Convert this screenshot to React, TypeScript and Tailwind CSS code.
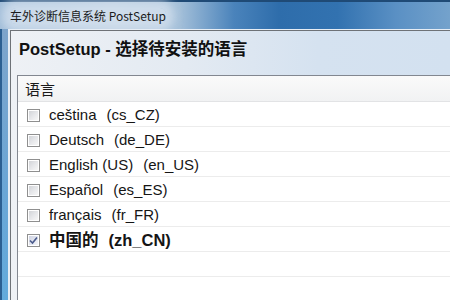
import React from "react";

function CheckBox({ checked }: { checked?: boolean }) {
  return (
    <div className="w-[13px] h-[13px] shrink-0 border border-[#8f8f8f] bg-white p-px">
      <div
        className={
          "w-full h-full flex items-center justify-center " +
          (checked
            ? "bg-[linear-gradient(135deg,#cfd3e2_0%,#e2e5ef_50%,#f4f5f9_100%)]"
            : "bg-[linear-gradient(135deg,#d2d4d8_0%,#e6e7ea_50%,#f7f7f7_100%)]")
        }
      >
        {checked && (
          <svg width="9" height="9" viewBox="0 0 9 9">
            <path d="M1 4.5 L3.5 7 L8 1.5" fill="none" stroke="#4a5a8c" strokeWidth="1.6" />
          </svg>
        )}
      </div>
    </div>
  );
}

const items = [
  { name: "ceština", code: "(cs_CZ)" },
  { name: "Deutsch", code: "(de_DE)" },
  { name: "English (US)", code: "(en_US)" },
  { name: "Español", code: "(es_ES)" },
  { name: "français", code: "(fr_FR)" },
  { name: "中国的", code: "(zh_CN)", checked: true },
];

export default function App() {
  return (
    <div className="w-[450px] h-[300px] overflow-hidden flex flex-col bg-[#5d8fc2] font-['Liberation_Sans','Noto_Sans_CJK_SC',sans-serif]">
      <div className="h-[29px] shrink-0 border-t-2 border-[#1f4a76] bg-[linear-gradient(90deg,#9fbcd8_0%,#b3c9de_25%,#a3bfd9_40%,#4a83bb_52%,#2e6dab_62%,#3272b0_75%,#5a90c4_88%,#74a2cc_100%)] flex items-center pl-[10px]">
        <span className="text-[12px] leading-[16px] text-[#1b1b1b] font-['Noto_Sans_CJK_SC',sans-serif] bg-[#dbe6f1]/70 rounded-[6px] shadow-[0_0_10px_8px_rgba(219,230,241,0.7)]">
          车外诊断信息系统 PostSetup
        </span>
      </div>
      <div className="flex flex-1 min-h-0">
        <div className="w-[8px] shrink-0 border-l-2 border-[#2b5f92] bg-[linear-gradient(180deg,#7da4cb_0%,#6aa6d6_60%,#62aadc_100%)]" />
        <div className="flex-1 min-w-0 border-l-2 border-t border-[#e6edf5]">
          <div className="h-full border-l border-t border-[#6e7277] bg-[linear-gradient(90deg,#eef1f5_0%,#e3eaf2_40%,#d5e2f0_70%,#d3e1f0_100%)] flex flex-col">
            <div className="h-[44px] shrink-0 flex items-center pl-[8px] pb-[9px]">
              <span className="text-[16.5px] font-bold text-[#111] leading-[20px]">
                PostSetup - 选择待安装的语言
              </span>
            </div>
            <div className="flex-1 ml-[6px] border-l border-t border-[#828790] bg-white flex flex-col">
              <div className="h-[26px] shrink-0 border-b border-[#e2e3e5] bg-[linear-gradient(180deg,#fafafa,#f1f2f3)] flex items-center pl-[7px] pt-[1px]">
                <span className="text-[15px] text-[#1a1a1a] font-['Noto_Sans_CJK_SC',sans-serif] leading-[18px]">语言</span>
              </div>
              {items.map((it, i) => (
                <div key={i} className="h-[25px] shrink-0 border-b border-[#ececec] flex items-center pl-[9px] pt-[2px] gap-[9px]">
                  <CheckBox checked={it.checked} />
                  <span
                    className={
                      "leading-[18px] text-[#151515] whitespace-pre flex gap-[10px] " +
                      (it.checked ? "font-bold text-[16.5px]" : "text-[15px]")
                    }
                  >
                    <span>{it.name}</span>
                    <span>{it.code}</span>
                  </span>
                </div>
              ))}
              <div className="h-[25px] shrink-0 border-b border-[#ececec]" />
              <div className="h-[25px] shrink-0 border-b border-[#ececec]" />
            </div>
          </div>
        </div>
      </div>
    </div>
  );
}
